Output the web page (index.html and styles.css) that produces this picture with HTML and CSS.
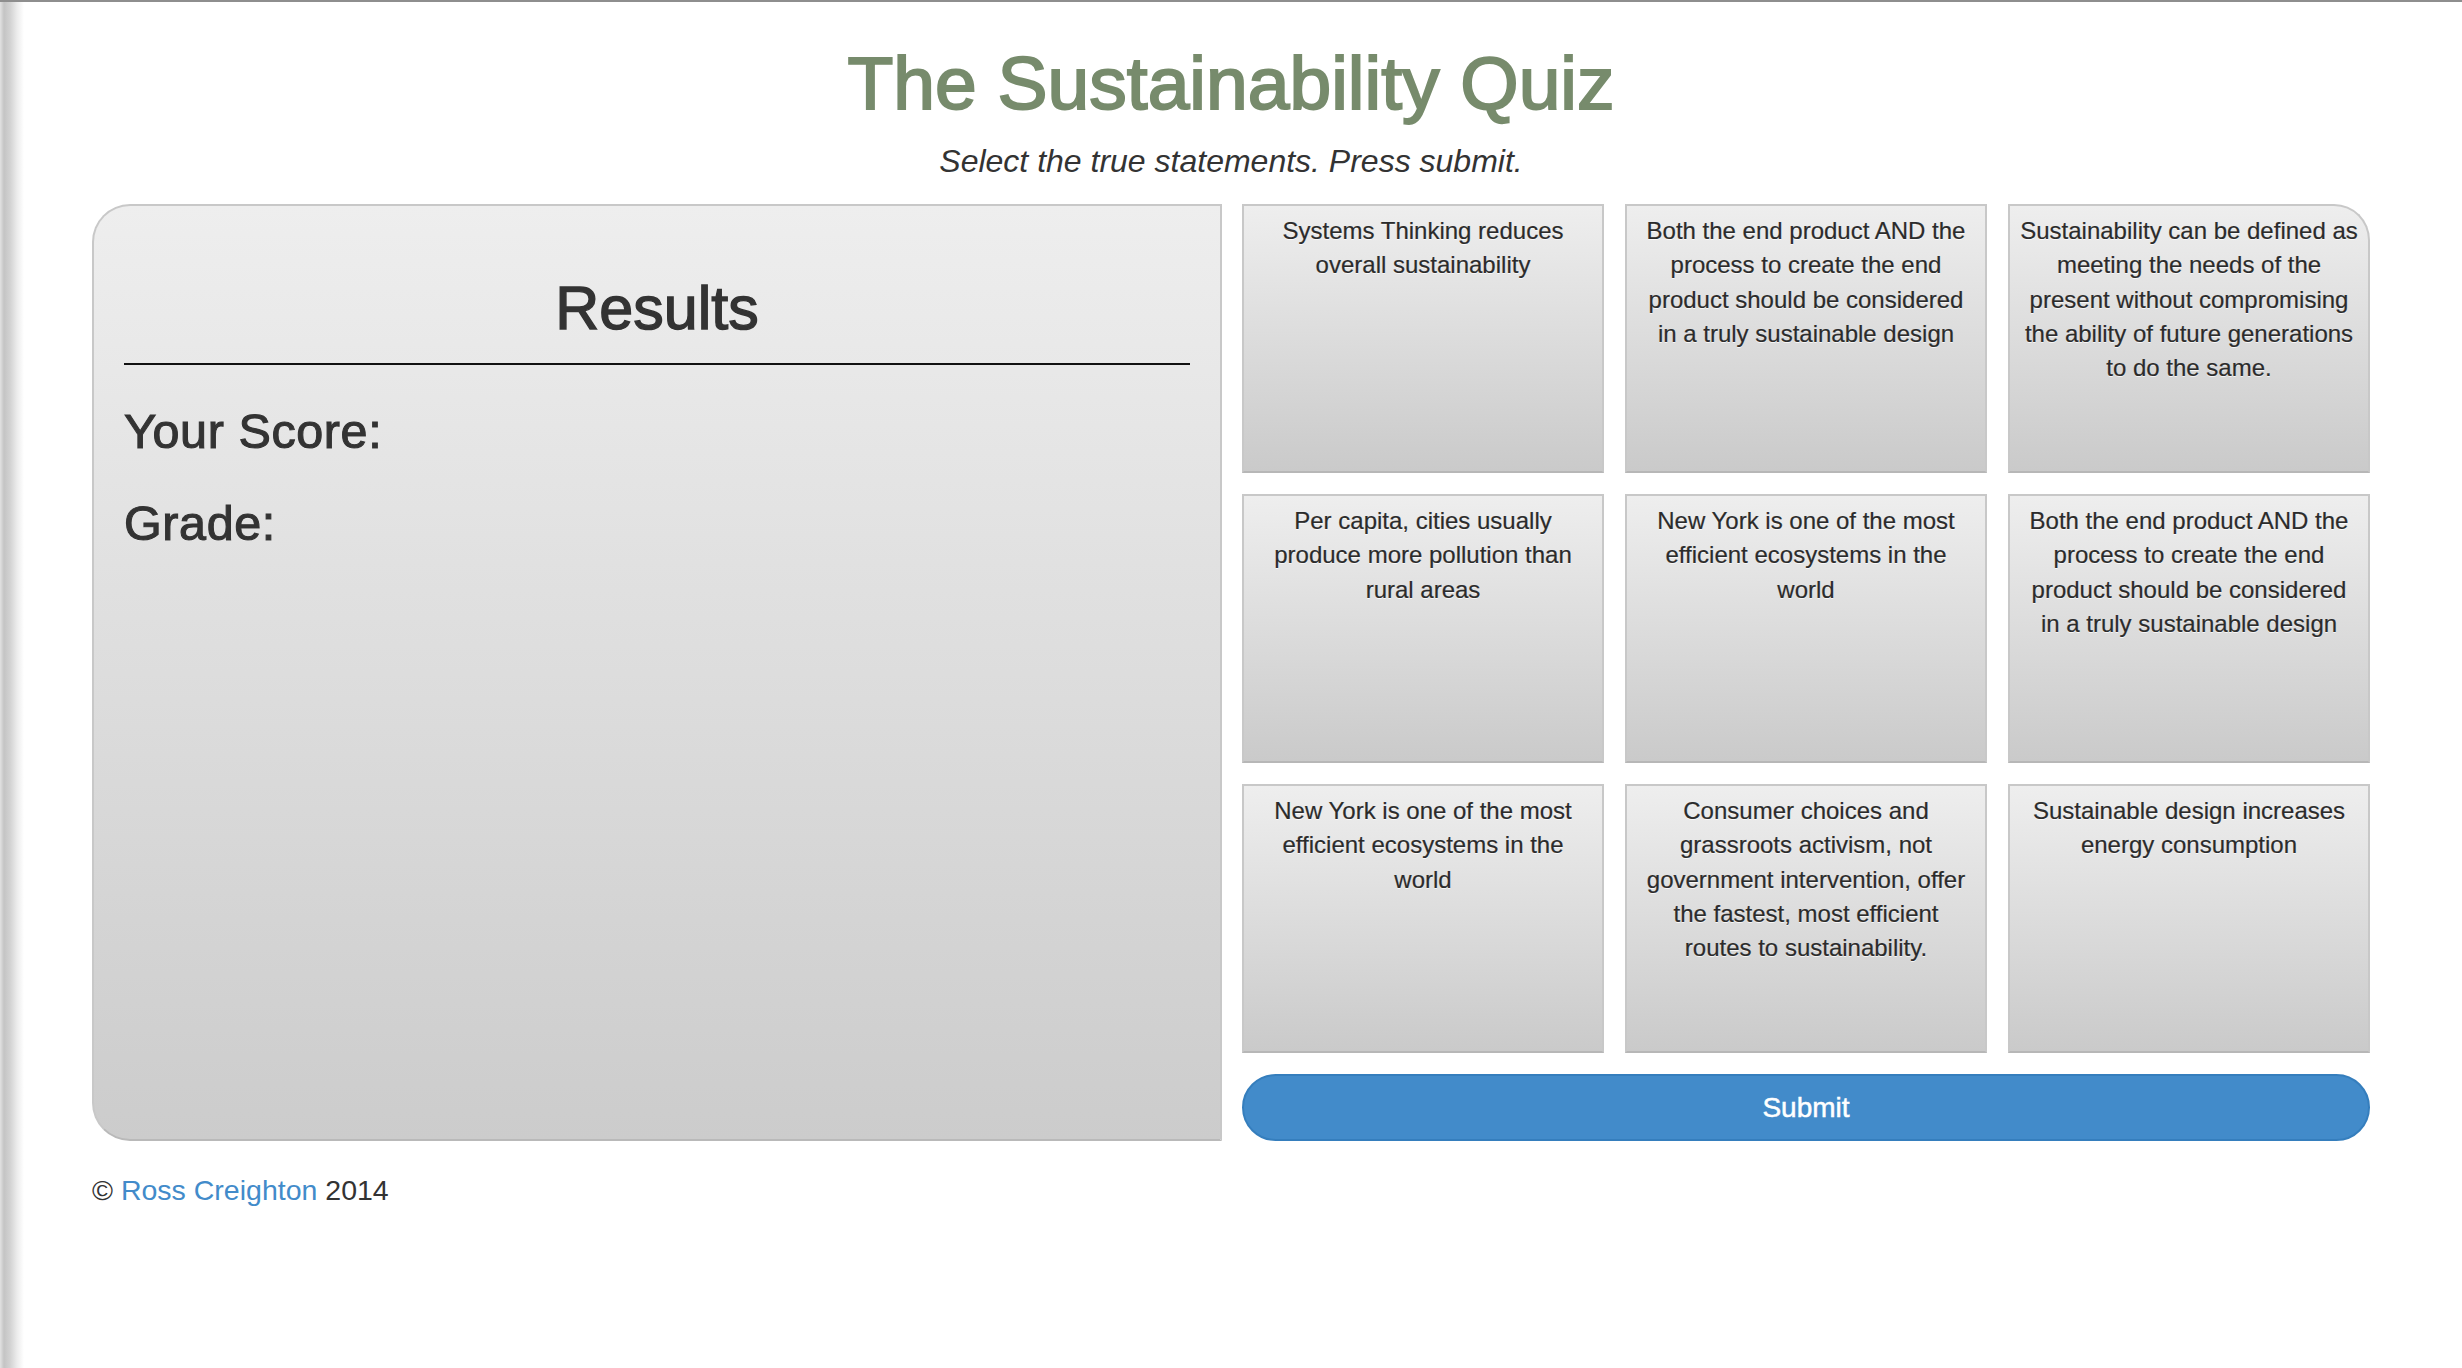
FILE: index.html
```html
<!DOCTYPE html>
<html lang="en">
<head>
<meta charset="utf-8">
<title>The Sustainability Quiz</title>
<link rel="stylesheet" href="styles.css">
</head>
<body>
<header class="page-header">
  <h1 class="title">The Sustainability Quiz</h1>
  <p class="lead">Select the true statements. Press submit.</p>
</header>
<main class="quiz">
  <section class="results">
    <h2 class="results-title">Results</h2>
    <hr class="rule">
    <h3 class="stat">Your Score:</h3>
    <h3 class="stat">Grade:</h3>
  </section>
  <section class="statements">
    <div class="card">Systems Thinking reduces<br>overall sustainability</div>
    <div class="card">Both the end product AND the<br>process to create the end<br>product should be considered<br>in a truly sustainable design</div>
    <div class="card card-corner">Sustainability can be defined as<br>meeting the needs of the<br>present without compromising<br>the ability of future generations<br>to do the same.</div>
    <div class="card">Per capita, cities usually<br>produce more pollution than<br>rural areas</div>
    <div class="card">New York is one of the most<br>efficient ecosystems in the<br>world</div>
    <div class="card">Both the end product AND the<br>process to create the end<br>product should be considered<br>in a truly sustainable design</div>
    <div class="card">New York is one of the most<br>efficient ecosystems in the<br>world</div>
    <div class="card">Consumer choices and<br>grassroots activism, not<br>government intervention, offer<br>the fastest, most efficient<br>routes to sustainability.</div>
    <div class="card">Sustainable design increases<br>energy consumption</div>
    <button class="submit" type="button">Submit</button>
  </section>
</main>
<footer class="footer">© <a href="#" class="author">Ross Creighton</a> 2014</footer>
</body>
</html>
```

FILE: styles.css
```css
html {
  min-height: 100%;
  background:
    linear-gradient(#8e8e8e, #8e8e8e) left top / 100% 2px no-repeat,
    linear-gradient(to right, #e2e2e2 0px, #c4c4c4 4px, #d2d2d2 10px, #ececec 17px, #ffffff 24px) left top / 24px 100% no-repeat,
    #ffffff;
}

body {
  margin: 0;
  padding-top: 2px;
  font-family: "Liberation Sans", Arial, sans-serif;
  color: #333333;
}

.page-header {
  padding-top: 40px;
  text-align: center;
}

.title {
  margin: 0;
  font-size: 75px;
  line-height: 82px;
  font-weight: normal;
  color: #778b6c;
  -webkit-text-stroke: 2px #778b6c;
}

.lead {
  margin: 15px 0 0;
  font-size: 32px;
  line-height: 45px;
  font-style: italic;
  color: #333333;
}

.quiz {
  width: 2278px;
  margin: 20px auto 0;
  display: grid;
  grid-template-columns: 1130px 1fr;
  column-gap: 20px;
}

.results {
  border: 2px solid #c8c8c8;
  border-bottom-color: #b9b9b9;
  border-radius: 38px 0 0 38px;
  background: linear-gradient(to bottom, #eeeeee, #cccccc);
  padding: 0 30px;
  text-shadow: 0 1px 0 rgba(255, 255, 255, 0.6);
}

.results-title {
  margin: 69px 0 0;
  text-align: center;
  font-size: 61px;
  line-height: 67px;
  font-weight: normal;
  color: #333333;
  -webkit-text-stroke: 1.4px #333333;
}

.rule {
  margin: 21px 0 0;
  border: 0;
  height: 2px;
  background: #111111;
}

.stat {
  margin: 40px 0 0;
  font-size: 48.5px;
  line-height: 53px;
  letter-spacing: 0.6px;
  font-weight: normal;
  color: #333333;
  -webkit-text-stroke: 1.1px #333333;
}

.stat + .stat {
  margin-top: 39px;
}

.statements {
  display: grid;
  grid-template-columns: repeat(3, 1fr);
  grid-template-rows: repeat(3, 269px) 67px;
  column-gap: 21px;
  row-gap: 21px;
}

.card {
  box-sizing: border-box;
  border: 2px solid #c8c8c8;
  border-bottom-color: #b7b7b7;
  background: linear-gradient(to bottom, #eeeeee, #cacaca);
  padding: 8px 9px 0;
  text-align: center;
  font-size: 24px;
  line-height: 34.3px;
  color: #2b2b2b;
  -webkit-text-stroke: 0.2px #2b2b2b;
  text-shadow: 0 1px 0 rgba(255, 255, 255, 0.75);
}

.card-corner {
  border-top-right-radius: 36px;
}

.submit {
  grid-column: 1 / -1;
  box-sizing: border-box;
  height: 67px;
  border: 2px solid #357ebd;
  border-radius: 34px;
  background: #428bca;
  color: #ffffff;
  font-family: "Liberation Sans", Arial, sans-serif;
  font-size: 28px;
  -webkit-text-stroke: 0.5px #ffffff;
  padding: 0;
  cursor: pointer;
}

.footer {
  width: 2278px;
  margin: 29px auto 0;
  font-size: 28.5px;
  line-height: 40px;
  color: #333333;
}

.author {
  color: #428bca;
  text-decoration: none;
}
```
